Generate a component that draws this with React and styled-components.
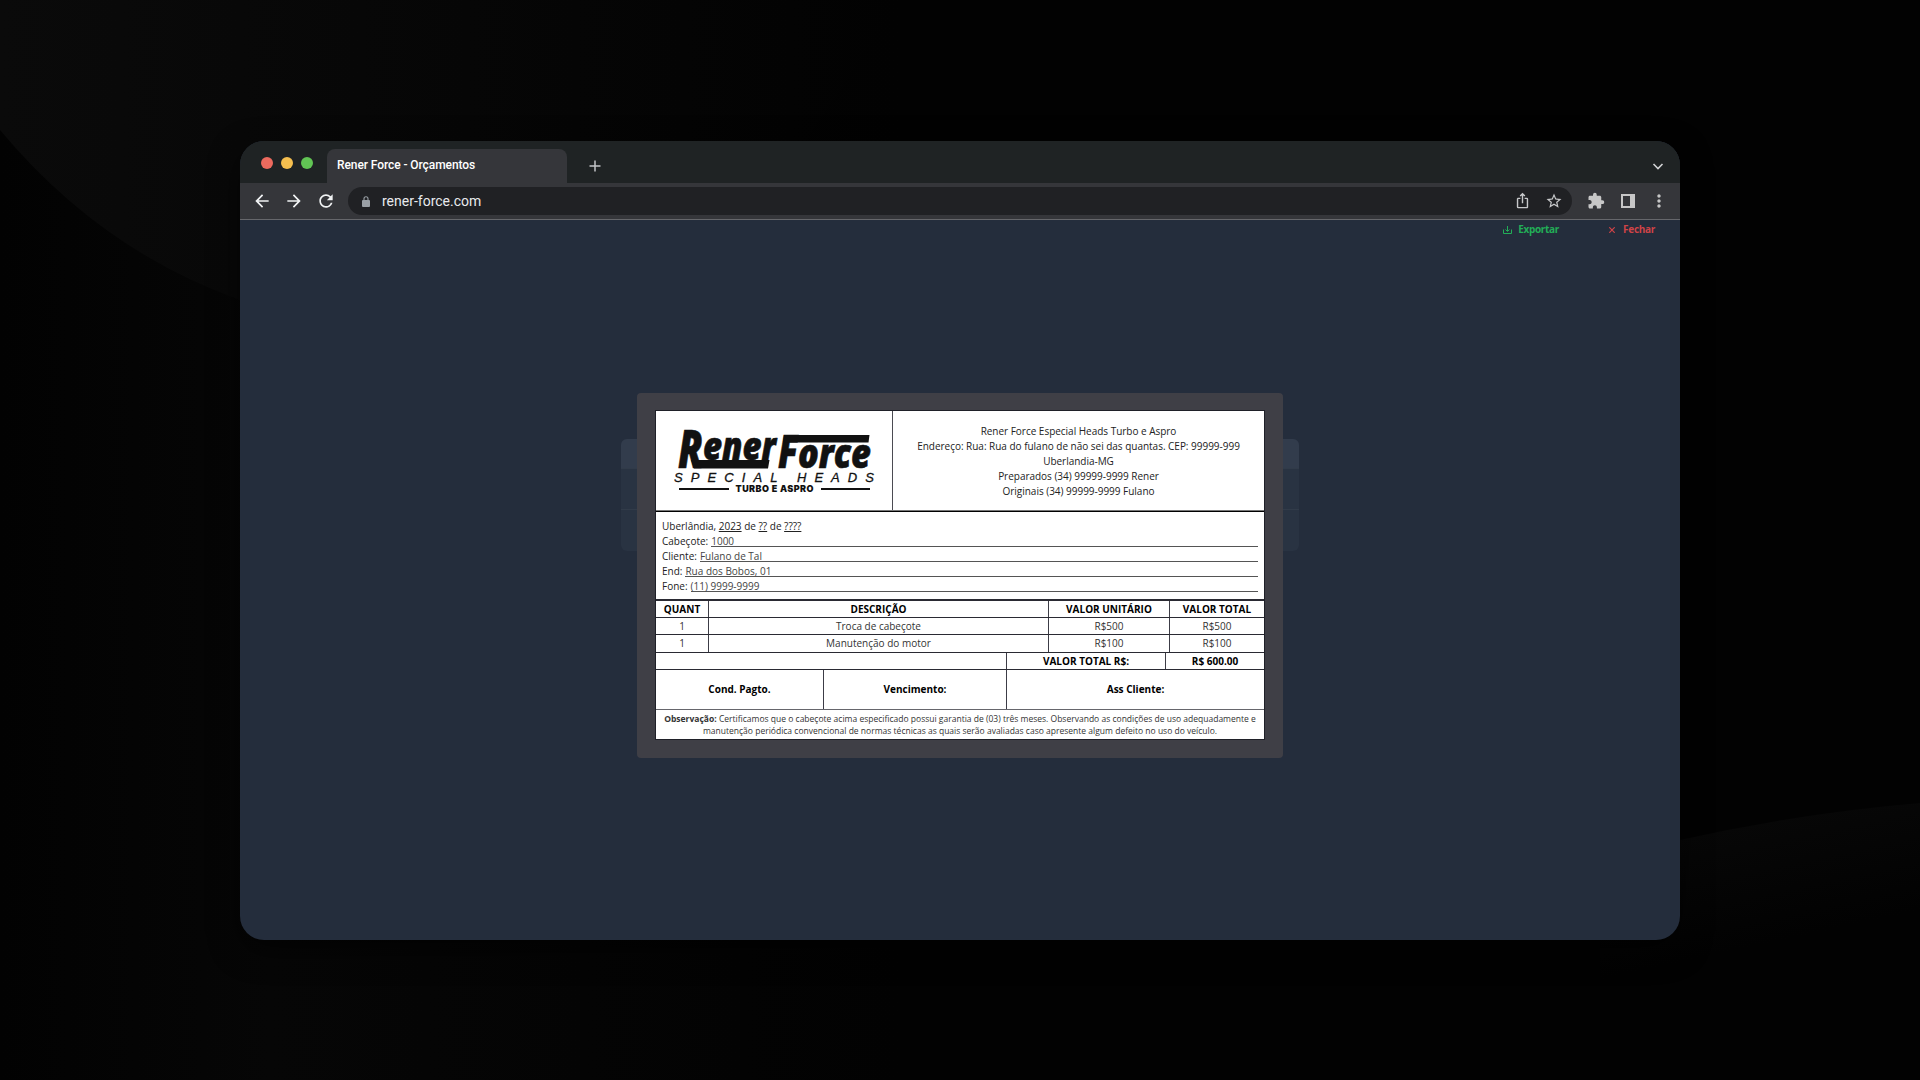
import React from "react";
import styled, { createGlobalStyle } from "styled-components";
import { MdArrowBack, MdArrowForward, MdRefresh, MdExtension, MdStarBorder, MdIosShare, MdMoreVert } from "react-icons/md";

const Global = createGlobalStyle`
  * { box-sizing: border-box; }
  body { margin: 0; background: #000; font-family: "Open Sans", "Noto Sans", sans-serif; }
`;

const Stage = styled.div`
  position: relative;
  width: 1920px;
  height: 1080px;
  overflow: hidden;
  background: #020202;
  display: flex;
  justify-content: center;
  align-items: flex-start;
  padding-top: 141px;
`;

const Backdrop = styled.svg`
  position: absolute;
  inset: 0;
`;

const Window = styled.div`
  position: relative;
  width: 1440px;
  height: 799px;
  border-radius: 24px;
  overflow: hidden;
  display: flex;
  flex-direction: column;
  background: #242d3c;
  box-shadow: 0 10px 30px rgba(0, 0, 0, 0.6);
`;

const TabStrip = styled.div`
  height: 42px;
  flex: none;
  display: flex;
  align-items: flex-end;
  background: #1f2324;
  padding: 0 16px 0 21px;
`;

const Lights = styled.div`
  display: flex;
  gap: 8px;
  padding-bottom: 14px;
`;

const Light = styled.span`
  width: 12px;
  height: 12px;
  border-radius: 50%;
  background: ${(p) => p.$color};
`;

const Tab = styled.div`
  width: 240px;
  height: 34px;
  margin-left: 14px;
  border-radius: 8px 8px 0 0;
  background: #35363a;
  color: #fff;
  font: 500 12px/32px Roboto, sans-serif;
  letter-spacing: -0.08px;
  padding-left: 10px;
`;

const StripIcon = styled.svg`
  margin: 0 0 11px ${(p) => p.$ml};
`;

const Toolbar = styled.div`
  height: 37px;
  flex: none;
  display: flex;
  align-items: center;
  background: #35363a;
  border-bottom: 1px solid #66676b;
  color: #f1f3f4;
  padding: 0 11px 0 12px;
`;

const NavButtons = styled.div`
  display: flex;
  gap: 12px;
  margin-right: 12px;
`;

const AddressBar = styled.div`
  width: 1224px;
  flex: none;
  height: 28px;
  border-radius: 14px;
  background: #202124;
  display: flex;
  align-items: center;
  padding: 0 9px 0 14px;
  color: #c7c8ca;
`;

const Url = styled.span`
  flex: 1;
  margin-left: 12px;
  font: 400 14px/28px Roboto, sans-serif;
  color: #e8eaed;
`;

const BarIcons = styled.div`
  display: flex;
  gap: 14px;
`;

const Actions = styled.div`
  display: flex;
  align-items: center;
  gap: 15px;
  margin-left: 15px;
  color: #c7c7c7;
`;

const SidePanelIcon = styled.svg`
  margin: 0 -1px 0 1px;
`;

const Page = styled.main`
  flex: 1;
  position: relative;
  display: flex;
  flex-direction: column;
  align-items: center;
`;

const TopActions = styled.div`
  align-self: stretch;
  height: 21px;
  display: flex;
  align-items: flex-start;
  justify-content: flex-end;
  gap: 50px;
  padding-right: 25px;
`;

const TopButton = styled.button`
  border: 0;
  padding: 0;
  background: none;
  display: flex;
  align-items: center;
  gap: ${(p) => p.$gap};
  font: 700 10px/19px "Open Sans", sans-serif;
  letter-spacing: -0.3px;
  color: ${(p) => p.$color};
`;

const GhostTable = styled.div`
  position: absolute;
  left: 381px;
  top: 219px;
  width: 678px;
  height: 112px;
  border-radius: 6px;
  overflow: hidden;
  background: #293342;
  display: grid;
  grid-template-rows: 30px 41px 1fr;
`;

const GhostRow = styled.div`
  background: ${(p) => (p.$head ? "#323c4c" : "none")};
  border-bottom: 1px solid #313b49;
`;

const Modal = styled.section`
  position: relative;
  margin-top: 152px;
  width: 646px;
  height: 365px;
  padding: 17px 18px;
  border-radius: 4px;
  background: #3f3f46;
`;

const Paper = styled.article`
  width: 610px;
  height: 330px;
  background: #fff;
  border: 1px solid #1f2028;
  color: #222;
  display: flex;
  flex-direction: column;
`;

const Header = styled.header`
  flex: none;
  display: grid;
  grid-template-columns: 237px 1fr;
  height: 100px;
  border-bottom: 1px solid #777;
`;

const LogoCell = styled.div`
  border-right: 1px solid #4b4b52;
  padding: 15px 0 0 16px;
`;

const LogoArt = styled.svg`
  display: block;
  overflow: visible;
`;

const Company = styled.div`
  padding-top: 13px;
  display: flex;
  flex-direction: column;
  align-items: center;
`;

const Text = styled.span`
  font-size: 10px;
  line-height: 15px;
  font-weight: ${(p) => (p.$bold ? 700 : 400)};
  white-space: pre;
`;

const CompanyLine = styled(Text)`
  letter-spacing: -0.02px;
`;

const Info = styled.section`
  flex: none;
  height: 88px;
  border-top: 1px solid #000;
  padding: 7px 6px 0 6px;
  display: flex;
  flex-direction: column;
`;

const InfoRow = styled.div`
  height: 15px;
  display: flex;
  align-items: flex-start;
`;

const Underlined = styled(Text)`
  text-decoration: underline;
`;

const Fill = styled.span`
  flex: 1;
  height: 13px;
  display: flex;
  margin-left: 3px;
  border-bottom: 1px solid #555;
  color: #444;
`;

const Row = styled.div`
  flex: none;
  display: grid;
  grid-template-columns: ${(p) => p.$cols};
  height: ${(p) => p.$h};
  border-top: ${(p) => (p.$thick ? "2px" : "1px")} solid #2a2a33;
`;

const Cell = styled.div`
  display: flex;
  align-items: center;
  justify-content: center;
  color: ${(p) => (p.$strong ? "#000" : "#333")};
  & + & { border-left: 1px solid #3c3c46; }
`;

const Note = styled.footer`
  flex: none;
  border-top: 1px solid #66666c;
  padding-top: 3px;
  font-size: 8.52px;
  line-height: 12px;
  text-align: center;
  white-space: nowrap;
  color: #333;
`;

function Logo() {
  return (
    <LogoArt width="205" height="70" viewBox="0 0 205 70" fill="#111">
      <g fontFamily="Open Sans" fontWeight="800" fontStyle="italic" stroke="#111" strokeWidth=".7">
        <text x="6" y="42" fontSize="53" textLength="25" lengthAdjust="spacingAndGlyphs">R</text>
        <text x="31" y="34" fontSize="39" textLength="73" lengthAdjust="spacingAndGlyphs">ener</text>
        <text x="106" y="42" fontSize="46" textLength="20" lengthAdjust="spacingAndGlyphs">F</text>
        <text x="126" y="42" fontSize="41" textLength="73" lengthAdjust="spacingAndGlyphs">orce</text>
      </g>
      <path d="M19 34H97.500L96 42.500H22ZM112 9H197.500L196.500 16.500H111Z" />
      <text x="2" y="56" fontFamily="Liberation Sans" fontStyle="italic" fontSize="13" stroke="#111" strokeWidth=".3" textLength="200">SPECIAL HEADS</text>
      <text x="63.500" y="66" fontFamily="Inter" fontWeight="900" fontSize="9" textLength="78">TURBO E ASPRO</text>
      <path d="M7 62H57V64H7ZM149 62H198V64H149Z" />
    </LogoArt>
  );
}

const company = [
  "Rener Force Especial Heads Turbo e Aspro",
  "Endereço: Rua: Rua do fulano de não sei das quantas. CEP: 99999-999",
  "Uberlandia-MG",
  "Preparados (34) 99999-9999 Rener",
  "Originais (34) 99999-9999 Fulano",
];
const info = [["Cabeçote:", "1000"], ["Cliente:", "Fulano de Tal"], ["End:", "Rua dos Bobos, 01"], ["Fone:", "(11) 9999-9999"]];
const items = [["1", "Troca de cabeçote", "R$500", "R$500"], ["1", "Manutenção do motor", "R$100", "R$100"]];
const itemCols = "52px 340px 121px 1fr";

export default function App() {
  return (
    <>
      <Global />
      <Stage>
        <Backdrop width="1920" height="1080">
          <defs>
            <linearGradient id="topGlow" x1="0" y1="0" x2="1" y2="0">
              <stop offset="0" stopColor="#0a0a0a" />
              <stop offset=".4" stopColor="#070707" />
              <stop offset="1" stopColor="#020202" />
            </linearGradient>
            <linearGradient id="leftGlow" x1="0" y1="0" x2="1" y2="0">
              <stop offset="0" stopColor="#020202" />
              <stop offset=".3" stopColor="#060606" />
              <stop offset="1" stopColor="#020202" />
            </linearGradient>
            <linearGradient id="cornerGlow" x1="0" y1="0" x2=".25" y2="1">
              <stop offset="0" stopColor="#090909" />
              <stop offset=".6" stopColor="#020202" />
            </linearGradient>
          </defs>
          <path d="M0 0H900V1080H0Z" fill="url(#leftGlow)" />
          <path d="M0 0H900L700 300H240Q100 250 0 130Z" fill="url(#topGlow)" />
          <path d="M1600 856L1680 840Q1800 813 1920 803V1080H1600Z" fill="url(#cornerGlow)" />
        </Backdrop>
        <Window>
          <TabStrip>
            <Lights><Light $color="#ed6a5e" /><Light $color="#f5bf4f" /><Light $color="#61c554" /></Lights>
            <Tab>Rener Force - Orçamentos</Tab>
            <StripIcon $ml="22px" width="12" height="12" viewBox="0 0 12 12" stroke="#c3c5c7" strokeWidth="1.500"><path d="M6 .5V11.500M.5 6H11.500" /></StripIcon>
            <StripIcon $ml="auto" width="12" height="12" viewBox="0 0 12 12" fill="none" stroke="#d0d2d4" strokeWidth="1.600"><path d="M1.500 4L6 8.500L10.500 4" /></StripIcon>
          </TabStrip>
          <Toolbar>
            <NavButtons><MdArrowBack size={20} /><MdArrowForward size={20} /><MdRefresh size={20} /></NavButtons>
            <AddressBar>
              <svg width="8" height="11" viewBox="0 0 8 11"><rect y="4" width="8" height="7" rx="1" fill="#9aa0a6" /><path d="M2 4.500V2.800A2 2 0 0 1 6 2.800V4.500" fill="none" stroke="#9aa0a6" strokeWidth="1.100" /></svg>
              <Url>rener-force.com</Url>
              <BarIcons><MdIosShare size={17} /><MdStarBorder size={18} /></BarIcons>
            </AddressBar>
            <Actions>
              <MdExtension size={18} />
              <SidePanelIcon width="14" height="14" viewBox="0 0 14 14"><path fill="currentColor" fillRule="evenodd" d="M0 0H14V14H0ZM2 2V12H9V2Z" /></SidePanelIcon>
              <MdMoreVert size={20} />
            </Actions>
          </Toolbar>
          <Page>
            <GhostTable><GhostRow $head /><GhostRow /></GhostTable>
            <TopActions>
              <TopButton $color="#22ae57" $gap="6px">
                <svg width="9" height="8" viewBox="0 0 9 8" fill="none" stroke="currentColor"><path d="M.5 3.500V7.500H8.500V3.500M4.500 0V5M2.500 3.500L4.500 5.500L6.500 3.500" /></svg>
                Exportar
              </TopButton>
              <TopButton $color="#cf4347" $gap="8px">
                <svg width="6" height="6" viewBox="0 0 6 6" stroke="currentColor" strokeWidth="1.200"><path d="M.3 .3L5.700 5.700M5.700 .3L.3 5.700" /></svg>
                Fechar
              </TopButton>
            </TopActions>
            <Modal>
              <Paper>
                <Header>
                  <LogoCell><Logo /></LogoCell>
                  <Company>{company.map((t) => <CompanyLine key={t}>{t}</CompanyLine>)}</Company>
                </Header>
                <Info>
                  <InfoRow>
                    <Text>Uberlândia, </Text><Underlined>2023</Underlined><Text> de </Text><Underlined>??</Underlined><Text> de </Text><Underlined>????</Underlined>
                  </InfoRow>
                  {info.map(([label, value]) => <InfoRow key={label}><Text>{label}</Text><Fill><Text>{value}</Text></Fill></InfoRow>)}
                </Info>
                <Row $thick $cols={itemCols} $h="18px">
                  {["QUANT", "DESCRIÇÃO", "VALOR UNITÁRIO", "VALOR TOTAL"].map((t) => <Cell key={t} $strong><Text $bold>{t}</Text></Cell>)}
                </Row>
                {items.map((r, i) => (
                  <Row key={i} $cols={itemCols} $h={i ? "18px" : "17px"}>{r.map((t, j) => <Cell key={j}><Text>{t}</Text></Cell>)}</Row>
                ))}
                <Row $cols="350px 159px 1fr" $h="17px">
                  <Cell />
                  <Cell $strong><Text $bold>VALOR TOTAL R$:</Text></Cell>
                  <Cell $strong><Text $bold>R$ 600.00</Text></Cell>
                </Row>
                <Row $cols="167px 183px 1fr" $h="40px">
                  {["Cond. Pagto.", "Vencimento:", "Ass Cliente:"].map((t) => <Cell key={t} $strong><Text $bold>{t}</Text></Cell>)}
                </Row>
                <Note>
                  <b>Observação:</b> Certificamos que o cabeçote acima especificado possui garantia de (03) três meses. Observando as condições de uso adequadamente e
                  <br />
                  manutenção periódica convencional de normas técnicas as quais serão avaliadas caso apresente algum defeito no uso do veículo.
                </Note>
              </Paper>
            </Modal>
          </Page>
        </Window>
      </Stage>
    </>
  );
}
